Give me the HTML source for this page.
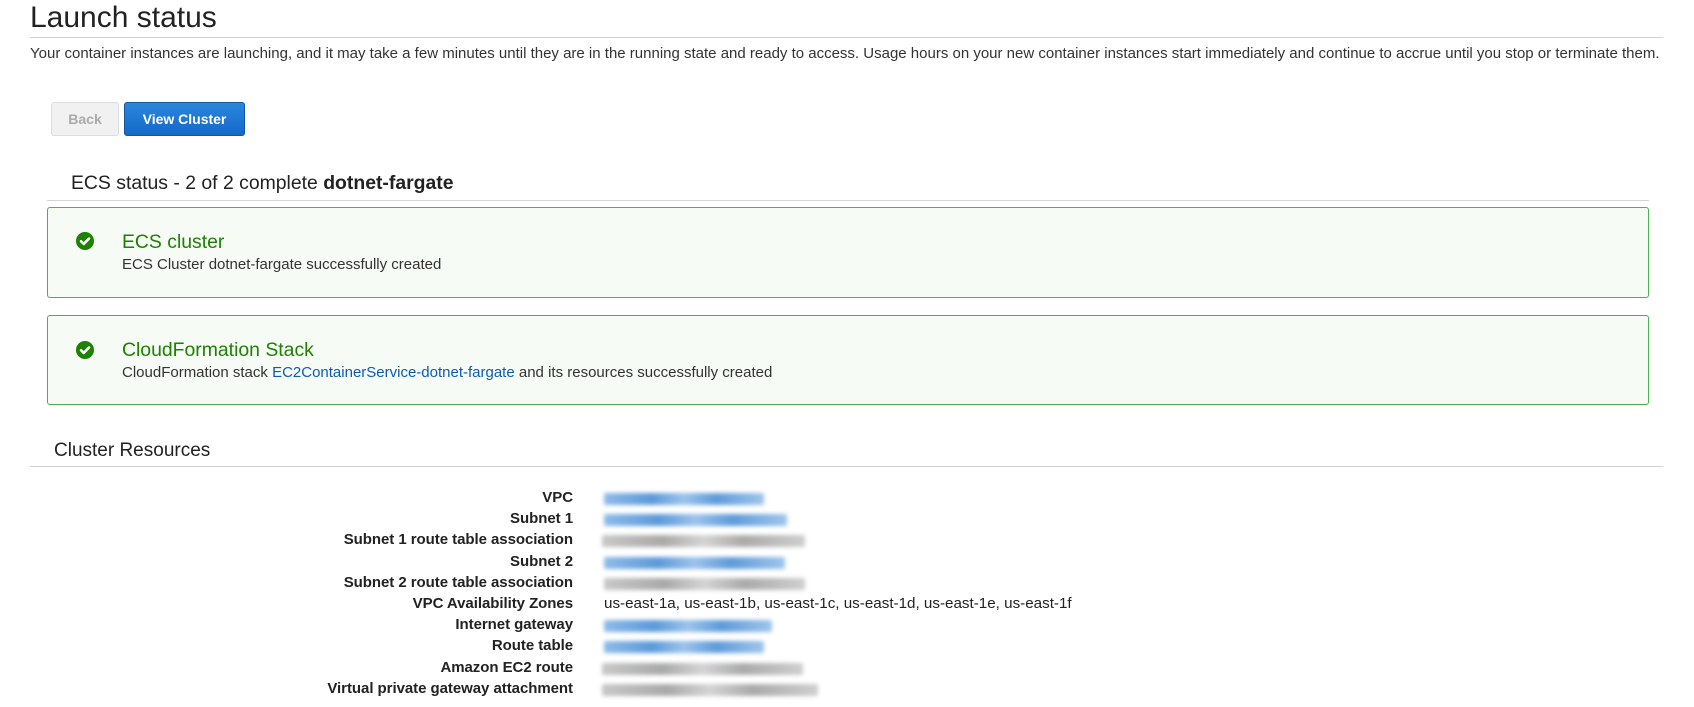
<!DOCTYPE html>
<html><head><meta charset="utf-8"><style>
*{margin:0;padding:0;box-sizing:border-box}
body{width:1694px;height:707px;background:#fff;font-family:"Liberation Sans",Arial,sans-serif;color:#222;position:relative;overflow:hidden}
.a{position:absolute;white-space:nowrap}
.hr{position:absolute;height:1px;background:#d5d5d5}
.btn{position:absolute;height:34px;border-radius:3px;font-weight:bold;font-size:14px;line-height:32px;text-align:center}
.box{position:absolute;left:47px;width:1602px;border:1px solid #4caf50;border-radius:3px;background:#f6fbf5}
.ic{position:absolute;width:18px;height:18px;border-radius:50%;background:#1d8102}
.ic svg{position:absolute;left:0;top:0}
.t{position:absolute;left:74px;font-size:19.4px;color:#1d8102;white-space:nowrap}
.s{position:absolute;left:74px;font-size:15px;color:#333;white-space:nowrap}
.lab{position:absolute;right:1121px;font-size:15px;font-weight:bold;color:#222;text-align:right;white-space:nowrap;letter-spacing:-0.05px}
.bl{position:absolute;height:12px;filter:blur(2px);border-radius:2px}
.blue{background:linear-gradient(90deg,#8fbbe8,#5c9ad9 30%,#9cc3ec 50%,#5f9bd9 70%,#9fc5ec)}
.grey{background:linear-gradient(90deg,#c8c8c8,#a9a9a9 30%,#d4d4d4 50%,#aaa 70%,#cfcfcf)}
</style></head><body>
<div class="a" style="left:30px;top:1px;font-size:30px;color:#222">Launch status</div>
<div class="hr" style="left:30px;top:37px;width:1633px"></div>
<div class="a" style="left:30px;top:45px;font-size:15px;color:#333">Your container instances are launching, and it may take a few minutes until they are in the running state and ready to access. Usage hours on your new container instances start immediately and continue to accrue until you stop or terminate them.</div>

<div class="btn" style="left:51px;top:102px;width:68px;background:#f1f1f1;border:1px solid #ddd;color:#aaa">Back</div>
<div class="btn" style="left:124px;top:102px;width:121px;background:linear-gradient(#2a86dd,#1569c7);border:1px solid #13559e;color:#fff">View Cluster</div>

<div class="a" style="left:71px;top:172px;font-size:19.4px;color:#222">ECS status - 2 of 2 complete <b>dotnet-fargate</b></div>
<div class="hr" style="left:47px;top:200px;width:1602px"></div>

<div class="box" style="top:207px;height:91px">
 <div class="ic" style="left:28px;top:24px"><svg width="18" height="18" viewBox="0 0 18 18"><path d="M5 9.2l2.7 2.7L13 6.6" stroke="#fff" stroke-width="2.6" fill="none" stroke-linecap="round" stroke-linejoin="round"/></svg></div>
 <div class="t" style="top:23px">ECS cluster</div>
 <div class="s" style="top:48px">ECS Cluster dotnet-fargate successfully created</div>
</div>
<div class="box" style="top:315px;height:90px">
 <div class="ic" style="left:28px;top:25px"><svg width="18" height="18" viewBox="0 0 18 18"><path d="M5 9.2l2.7 2.7L13 6.6" stroke="#fff" stroke-width="2.6" fill="none" stroke-linecap="round" stroke-linejoin="round"/></svg></div>
 <div class="t" style="top:23px">CloudFormation Stack</div>
 <div class="s" style="top:48px">CloudFormation stack <span style="color:#0d5bb5">EC2ContainerService-dotnet-fargate</span> and its resources successfully created</div>
</div>

<div class="a" style="left:54px;top:440px;font-size:19px;color:#222">Cluster Resources</div>
<div class="hr" style="left:30px;top:466px;width:1633px"></div>

<div class="lab" style="top:489px">VPC</div>
<div class="lab" style="top:510px">Subnet 1</div>
<div class="lab" style="top:531px">Subnet 1 route table association</div>
<div class="lab" style="top:553px">Subnet 2</div>
<div class="lab" style="top:574px">Subnet 2 route table association</div>
<div class="lab" style="top:595px">VPC Availability Zones</div>
<div class="lab" style="top:616px">Internet gateway</div>
<div class="lab" style="top:637px">Route table</div>
<div class="lab" style="top:659px">Amazon EC2 route</div>
<div class="lab" style="top:680px">Virtual private gateway attachment</div>

<div class="bl blue" style="left:604px;top:493px;width:160px"></div>
<div class="bl blue" style="left:604px;top:514px;width:183px"></div>
<div class="bl grey" style="left:602px;top:535px;width:203px"></div>
<div class="bl blue" style="left:604px;top:557px;width:181px"></div>
<div class="bl grey" style="left:604px;top:578px;width:201px"></div>
<div class="a" style="left:604px;top:595px;font-size:15.2px;color:#222">us-east-1a, us-east-1b, us-east-1c, us-east-1d, us-east-1e, us-east-1f</div>
<div class="bl blue" style="left:604px;top:620px;width:168px"></div>
<div class="bl blue" style="left:604px;top:641px;width:160px"></div>
<div class="bl grey" style="left:602px;top:663px;width:201px"></div>
<div class="bl grey" style="left:602px;top:684px;width:216px"></div>
</body></html>
